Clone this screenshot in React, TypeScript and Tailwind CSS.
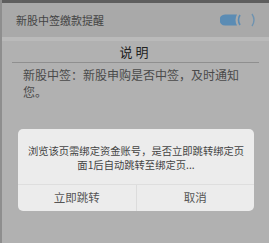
import React from 'react';

const font = { fontFamily: '"Noto Sans CJK SC", "Noto Sans", sans-serif' };

const Toggle: React.FC = () => (
  <svg width="40" height="18" viewBox="0 0 40 18" className="block">
    <path d="M5 3.5 H17 Q14 9 17 14.5 H5 A5.5 5.5 0 0 1 5 3.5 Z" fill="#5b8cb4" />
    <path d="M20 4 Q17 9 20 14" stroke="#5b8cb4" strokeWidth="1.6" fill="none" />
    <path d="M32 3 Q36 9 32 15" stroke="#6f93b0" strokeWidth="1.4" fill="none" />
  </svg>
);

export default function App() {
  return (
    <div
      className="relative w-[269px] h-[243px] overflow-hidden bg-[#b1b1b1] border-l-2 border-[#8e8e8e]"
      style={font}
    >
      <div className="h-[3px] bg-[#5e5e5e]" />
      <div className="flex items-center justify-between h-[34px] bg-[#a9a9a9] pl-[14px] pr-[9px]">
        <span className="text-[11px] text-[#444] leading-none">新股中签缴款提醒</span>
        <Toggle />
      </div>
      <div className="h-[4px] bg-[#bababa]" />
      <div className="px-[10px]">
        <div className="flex items-center justify-center h-[22px] border-b border-[#8f8f8f] text-[13px] text-[#222] tracking-[3px]">
          说明
        </div>
        <p className="px-[11px] pt-[3px] text-[12px] leading-[17px] text-[#4a4a4a]">
          新股中签：新股申购是否中签，及时通知您。
        </p>
      </div>

      <div className="absolute left-[16px] top-[129px] w-[236px] h-[82px] rounded-[5px] bg-[#ececec] flex flex-col">
        <div className="flex-1 flex flex-col items-center justify-center text-[10.3px] leading-[14px] text-[#444] pt-[3px]">
          <span>浏览该页需绑定资金账号，是否立即跳转绑定页</span>
          <span>面1后自动跳转至绑定页...</span>
        </div>
        <div className="flex h-[27px] border-t border-[#dedede] text-[11.5px] text-[#555]">
          <div className="flex-1 flex items-center justify-center border-r border-[#dcdcdc]">立即跳转</div>
          <div className="flex-1 flex items-center justify-center">取消</div>
        </div>
      </div>
    </div>
  );
}
